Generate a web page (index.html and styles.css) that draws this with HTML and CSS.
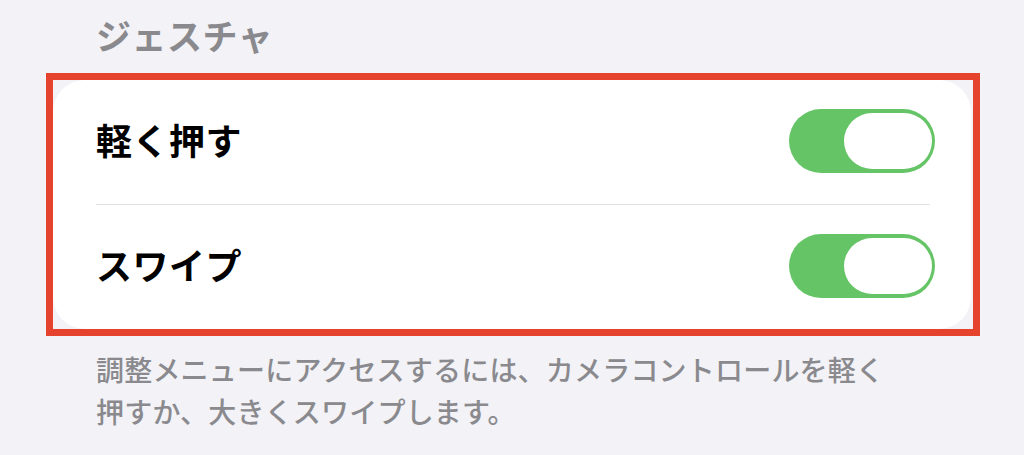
FILE: index.html
```html
<!DOCTYPE html>
<html lang="ja">
<head>
<meta charset="utf-8">
<link rel="stylesheet" href="styles.css">
</head>
<body>
<div class="page">
  <h2 class="section-title">ジェスチャ</h2>
  <div class="highlight">
    <div class="card">
      <div class="row">
        <span class="label">軽く押す</span>
        <div class="toggle"><div class="knob"></div></div>
      </div>
      <div class="sep"></div>
      <div class="row">
        <span class="label">スワイプ</span>
        <div class="toggle"><div class="knob"></div></div>
      </div>
    </div>
  </div>
  <p class="footer">調整メニューにアクセスするには、カメラコントロールを軽く<br>押すか、大きくスワイプします。</p>
</div>
</body>
</html>
```
FILE: styles.css
```css
html, body {
  margin: 0;
  padding: 0;
  background: #f2f2f7;
}
body {
  font-family: "Noto Sans CJK JP", "Noto Sans", sans-serif;
  width: 1024px;
  height: 455px;
  overflow: hidden;
}
.page {
  padding-top: 15px;
}
.section-title {
  margin: 0 0 18px 96px;
  font-size: 35px;
  line-height: 40px;
  font-weight: 700;
  color: #8a8a8e;
  letter-spacing: 0.5px;
}
.highlight {
  margin-left: 46px;
  width: 934px;
  box-sizing: border-box;
  border: 7px solid #e5432d;
  background: #f2f2f7;
}
.card {
  background: #ffffff;
  border-radius: 32px;
  margin-right: 2px;
}
.row {
  height: 124px;
  display: flex;
  align-items: center;
  justify-content: space-between;
  padding: 0 36px 0 43px;
}
.label {
  font-size: 36px;
  line-height: 44px;
  padding-bottom: 6px;
  font-weight: 700;
  color: #000;
  letter-spacing: 0.5px;
}
.toggle {
  margin-bottom: 2px;
}
.sep {
  height: 1px;
  background: #e2e2e6;
  margin: 0 41px 0 43px;
}
.toggle {
  width: 146px;
  height: 64px;
  border-radius: 32px;
  background: #65c466;
  display: flex;
  align-items: center;
  justify-content: flex-end;
  padding-right: 3px;
  box-sizing: border-box;
}
.knob {
  width: 88px;
  height: 56px;
  border-radius: 28px;
  background: #ffffff;
}
.footer {
  margin: 12px 0 0 96px;
  font-size: 28px;
  line-height: 42px;
  color: #8a8a8e;
  letter-spacing: 0.2px;
  font-weight: 500;
}
```
